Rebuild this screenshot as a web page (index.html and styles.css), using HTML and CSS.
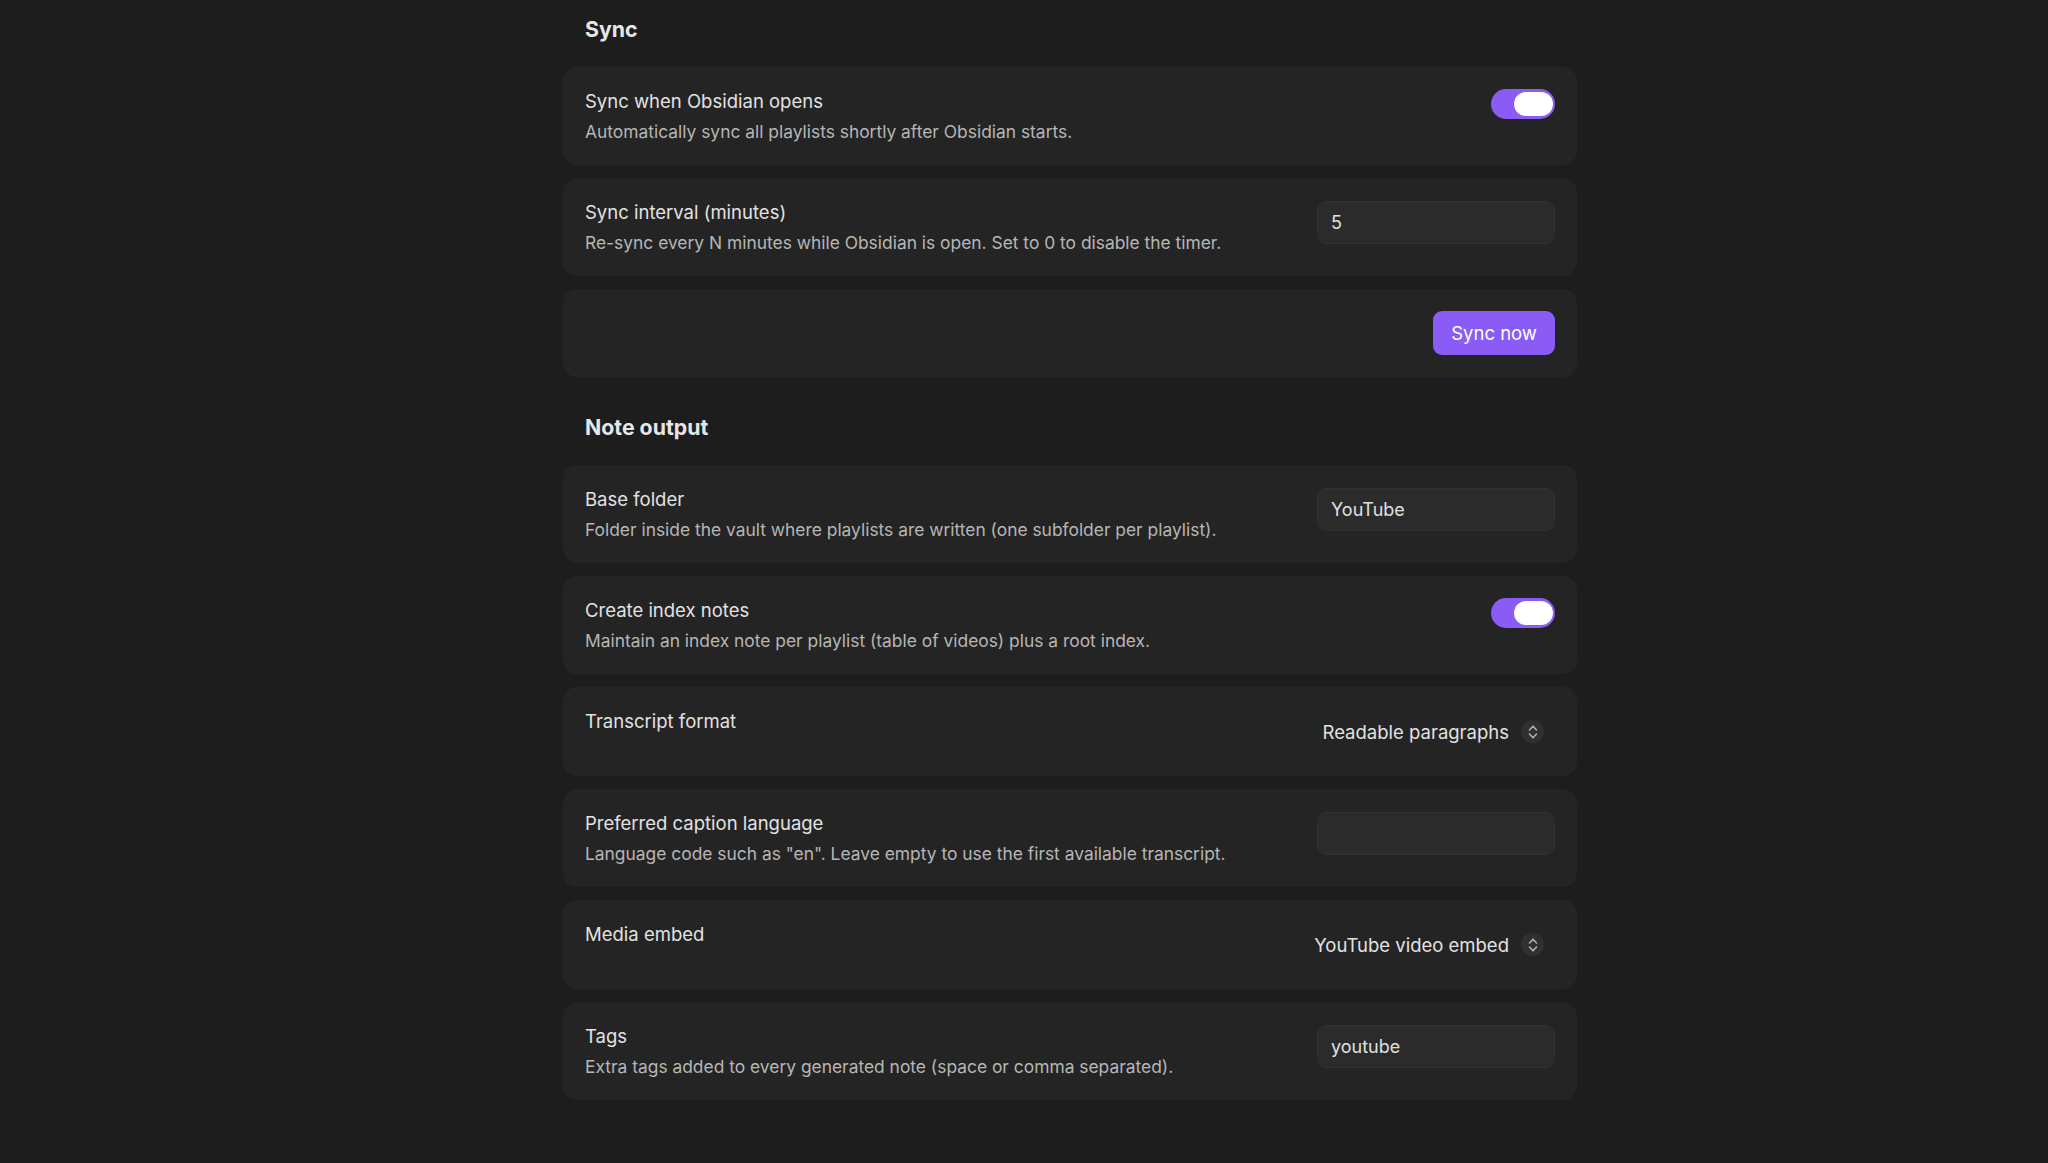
FILE: index.html
```html
<!DOCTYPE html>
<html lang="en">
<head>
<meta charset="utf-8">
<title>Settings</title>
<link rel="stylesheet" href="styles.css">
</head>
<body>
<div class="page">
  <section class="group">
    <h2 class="group-heading">Sync</h2>
    <div class="items">
      <div class="item">
        <div class="info">
          <div class="name">Sync when Obsidian opens</div>
          <div class="desc">Automatically sync all playlists shortly after Obsidian starts.</div>
        </div>
        <div class="control">
          <div class="toggle on"><div class="knob"></div></div>
        </div>
      </div>
      <div class="item">
        <div class="info">
          <div class="name">Sync interval (minutes)</div>
          <div class="desc">Re-sync every N minutes while Obsidian is open. Set to 0 to disable the timer.</div>
        </div>
        <div class="control">
          <input class="text-input" type="text" value="5">
        </div>
      </div>
      <div class="item item-button">
        <div class="info"></div>
        <div class="control">
          <button class="cta">Sync now</button>
        </div>
      </div>
    </div>
  </section>

  <section class="group">
    <h2 class="group-heading">Note output</h2>
    <div class="items">
      <div class="item">
        <div class="info">
          <div class="name">Base folder</div>
          <div class="desc">Folder inside the vault where playlists are written (one subfolder per playlist).</div>
        </div>
        <div class="control">
          <input class="text-input" type="text" value="YouTube">
        </div>
      </div>
      <div class="item">
        <div class="info">
          <div class="name">Create index notes</div>
          <div class="desc">Maintain an index note per playlist (table of videos) plus a root index.</div>
        </div>
        <div class="control">
          <div class="toggle on"><div class="knob"></div></div>
        </div>
      </div>
      <div class="item">
        <div class="info">
          <div class="name">Transcript format</div>
        </div>
        <div class="control">
          <div class="dropdown">
            <span class="dropdown-value">Readable paragraphs</span>
            <span class="dropdown-icon">
              <svg viewBox="0 0 10 16" width="10" height="16" fill="none" stroke="currentColor" stroke-width="1.6" stroke-linecap="round" stroke-linejoin="round"><path d="M1.5 6 5 2.2 8.5 6"/><path d="M1.5 10 5 13.8 8.5 10"/></svg>
            </span>
          </div>
        </div>
      </div>
      <div class="item">
        <div class="info">
          <div class="name">Preferred caption language</div>
          <div class="desc">Language code such as "en". Leave empty to use the first available transcript.</div>
        </div>
        <div class="control">
          <input class="text-input" type="text" value="">
        </div>
      </div>
      <div class="item">
        <div class="info">
          <div class="name">Media embed</div>
        </div>
        <div class="control">
          <div class="dropdown">
            <span class="dropdown-value">YouTube video embed</span>
            <span class="dropdown-icon">
              <svg viewBox="0 0 10 16" width="10" height="16" fill="none" stroke="currentColor" stroke-width="1.6" stroke-linecap="round" stroke-linejoin="round"><path d="M1.5 6 5 2.2 8.5 6"/><path d="M1.5 10 5 13.8 8.5 10"/></svg>
            </span>
          </div>
        </div>
      </div>
      <div class="item">
        <div class="info">
          <div class="name">Tags</div>
          <div class="desc">Extra tags added to every generated note (space or comma separated).</div>
        </div>
        <div class="control">
          <input class="text-input" type="text" value="youtube">
        </div>
      </div>
    </div>
  </section>
</div>
</body>
</html>
```

FILE: styles.css
```css
* {
  box-sizing: border-box;
}

html, body {
  margin: 0;
  padding: 0;
  background: #1d1d1d;
}

body {
  font-family: Inter, "Noto Sans", "Liberation Sans", sans-serif;
  color: #dedede;
  height: 1163px;
  overflow: hidden;
}

.page {
  width: 1014px;
  margin-left: 563px;
  padding-top: 14px;
}

.group + .group {
  margin-top: 35px;
}

.group-heading {
  margin: 0 0 23px 0;
  padding-left: 22px;
  font-size: 21.3px;
  line-height: 30px;
  font-weight: 700;
  color: #e6e6e6;
}

.items {
  display: flex;
  flex-direction: column;
  gap: 13px;
}

.item {
  display: flex;
  align-items: flex-start;
  justify-content: space-between;
  gap: 24px;
  background: #242424;
  border-radius: 14px;
  padding: 21px 22px 21px 22px;
}

.item-button {
  padding-top: 22px;
  padding-bottom: 22px;
}

.info {
  flex: 1 1 auto;
  min-width: 0;
}

.name {
  font-size: 18.5px;
  line-height: 27px;
  color: #e2e2e2;
}

.desc {
  margin-top: 4px;
  font-size: 17.4px;
  line-height: 25px;
  color: #b6b6b6;
}

.control {
  flex: 0 0 auto;
  display: flex;
  align-items: center;
}

.toggle {
  width: 64px;
  height: 30px;
  margin-top: 1px;
  border-radius: 15px;
  background: #8a5cf5;
  padding: 3px 2px 3px 23px;
}

.knob {
  width: 39px;
  height: 24px;
  border-radius: 12px;
  background: #ffffff;
}

.text-input {
  width: 238px;
  height: 43px;
  margin-top: 2px;
  border-radius: 9px;
  border: 1px solid #303030;
  background: #2b2b2b;
  color: #e0e0e0;
  font-family: Inter, "Noto Sans", "Liberation Sans", sans-serif;
  font-size: 18px;
  padding: 0 13px;
  outline: none;
}

.cta {
  height: 44px;
  padding: 0 18px;
  border: none;
  border-radius: 9px;
  background: #8a5cf5;
  color: #ffffff;
  font-family: Inter, "Noto Sans", "Liberation Sans", sans-serif;
  font-size: 18.5px;
}

.dropdown {
  height: 47px;
  display: flex;
  align-items: center;
  gap: 12px;
  padding-right: 11px;
}

.dropdown-value {
  font-size: 18.5px;
  color: #e2e2e2;
}

.dropdown-icon {
  flex: 0 0 23px;
  width: 23px;
  height: 23px;
  border-radius: 50%;
  background: #303030;
  color: #b0b0b0;
  display: flex;
  align-items: center;
  justify-content: center;
}

.dropdown-icon svg {
  display: block;
}
```
